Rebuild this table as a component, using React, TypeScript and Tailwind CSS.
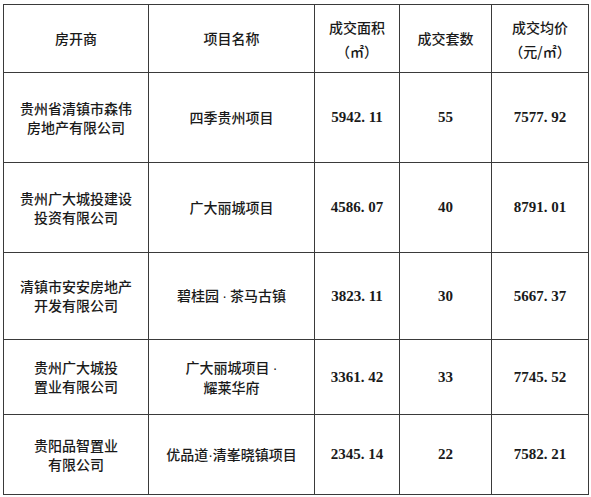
const rows = [
  { dev: ['贵州省清镇市森伟', '房地产有限公司'], name: ['四季贵州项目'], area: '5942. 11', count: '55', price: '7577. 92', h: 'h-[90px]' },
  { dev: ['贵州广大城投建设', '投资有限公司'], name: ['广大丽城项目'], area: '4586. 07', count: '40', price: '8791. 01', h: 'h-[90px]' },
  { dev: ['清镇市安安房地产', '开发有限公司'], name: ['碧桂园 · 茶马古镇'], area: '3823. 11', count: '30', price: '5667. 37', h: 'h-[87px]' },
  { dev: ['贵州广大城投', '置业有限公司'], name: ['广大丽城项目 ·', '耀莱华府'], area: '3361. 42', count: '33', price: '7745. 52', h: 'h-[75px]' },
  { dev: ['贵阳品智置业', '有限公司'], name: ['优品道·清峯晓镇项目'], area: '2345. 14', count: '22', price: '7582. 21', h: 'h-[80px]' },
]

const cell = 'border border-[#3a3a3a] text-center align-middle p-0'
const num = "font-['Liberation_Serif',serif] font-bold text-[15px]"

// the middle dot takes the Latin width, not the full CJK width
function Dotted({ text }: { text: string }) {
  const parts = text.split('·')
  return (
    <>
      {parts.map((p, i) => (
        <span key={i}>
          {i > 0 && <span className="font-['Liberation_Sans',sans-serif]">·</span>}
          {p}
        </span>
      ))}
    </>
  )
}

function Lines({ lines }: { lines: string[] }) {
  return (
    <div className="leading-[19px]">
      {lines.map((l) => (
        <div key={l} className="whitespace-pre">
          <Dotted text={l} />
        </div>
      ))}
    </div>
  )
}

export default function App() {
  return (
    <div className="w-[591px] h-[497px] bg-white pl-[3px] pt-[4px] text-[#1a1a1a] font-['Noto_Sans_CJK_SC',sans-serif] text-[14px] font-medium">
      <table className="border-collapse table-fixed w-[585px]">
        <colgroup>
          <col className="w-[145px]" />
          <col className="w-[166px]" />
          <col className="w-[85px]" />
          <col className="w-[92px]" />
          <col className="w-[97px]" />
        </colgroup>
        <thead>
          <tr className="h-[68px]">
            <th className={`${cell} font-medium`}>房开商</th>
            <th className={`${cell} font-medium`}>项目名称</th>
            <th className={`${cell} font-medium leading-[24px]`}>
              <div>成交面积</div>
              <div>（㎡）</div>
            </th>
            <th className={`${cell} font-medium`}>成交套数</th>
            <th className={`${cell} font-medium leading-[24px]`}>
              <div>成交均价</div>
              <div>（元/㎡）</div>
            </th>
          </tr>
        </thead>
        <tbody>
          {rows.map((r) => (
            <tr key={r.area} className={r.h}>
              <td className={cell}>
                <Lines lines={r.dev} />
              </td>
              <td className={cell}>
                <Lines lines={r.name} />
              </td>
              <td className={`${cell} ${num}`}>{r.area}</td>
              <td className={`${cell} ${num}`}>{r.count}</td>
              <td className={`${cell} ${num}`}>{r.price}</td>
            </tr>
          ))}
        </tbody>
      </table>
    </div>
  )
}
